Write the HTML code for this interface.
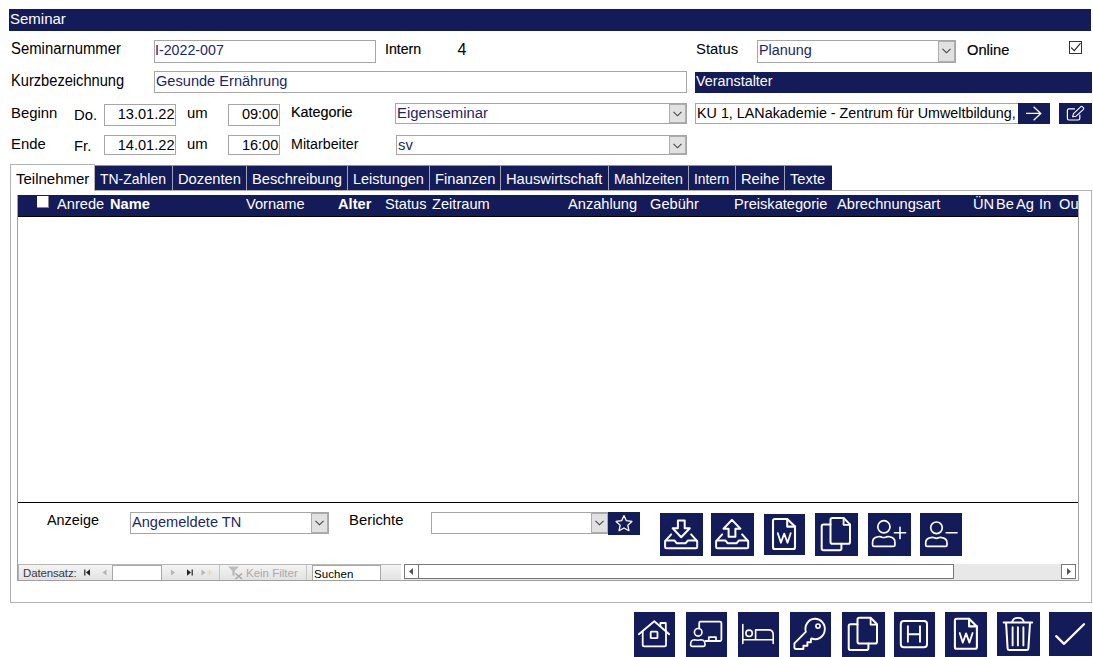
<!DOCTYPE html>
<html><head><meta charset="utf-8">
<style>
html,body{margin:0;padding:0;}
body{width:1093px;height:657px;background:#fff;position:relative;overflow:hidden;font-family:"Liberation Sans",sans-serif;font-size:16px;color:#000;}
.a{position:absolute;white-space:nowrap;}
.t{position:absolute;white-space:nowrap;line-height:18px;font-size:16px;transform:scaleX(.93);transform-origin:0 0;}
.tr{transform-origin:100% 0;}
.w{color:#fff;}
.b{font-weight:bold;}
.sb{-webkit-text-stroke:0.18px #000;}
.nv{background:#141b59;}
.in{position:absolute;box-sizing:border-box;border:1px solid #a6a6a6;background:#fff;overflow:hidden;}
.bl{color:#1d2566;}
.dd{position:absolute;box-sizing:border-box;border:1px solid #adadad;background:#e1e1e1;width:17px;}
.dd svg{position:absolute;left:3px;top:6px;}
.btn{position:absolute;background:#141b59;}
.sep{position:absolute;top:166px;width:1px;height:24px;background:#a0a2b8;}
.tb{font-size:15px;transform:scaleX(.98);}
.hd{font-size:15px;transform:scaleX(.975);}
</style></head><body>

<div class="a nv" style="left:9px;top:9px;width:1082px;height:22px;"></div>
<div class="t w" style="left:10px;top:9.500px;font-size:15px;transform:none;">Seminar</div>

<!-- row1 -->
<div class="t" style="left:11px;top:40px;">Seminarnummer</div>
<div class="in" style="left:154px;top:40px;width:222px;height:23px;"></div>
<div class="t bl" style="left:155px;top:40.600px;font-size:15.300px;transform:scaleX(.93);">I-2022-007</div>
<div class="t sb" style="left:385px;top:39.8px;font-size:14.67px;transform:scaleX(0.965);">Intern</div>
<div class="t" style="left:457.500px;top:41px;font-size:16px;transform:none;">4</div>
<div class="t" style="left:696px;top:39.8px;font-size:14.67px;transform:scaleX(1.014);">Status</div>
<div class="in" style="left:757px;top:40px;width:199px;height:23px;"></div>
<div class="t bl" style="left:759px;top:40.600px;font-size:15.300px;transform:scaleX(.94);">Planung</div>
<div class="dd" style="left:938px;top:41px;height:21px;"><svg width="9" height="6" viewBox="0 0 9 6"><path d="M0.5 0.8L4.5 4.8L8.5 0.8" fill="none" stroke="#444" stroke-width="1.1"/></svg></div>
<div class="t sb" style="left:967px;top:40.8px;font-size:14.67px;transform:none;">Online</div>
<div class="a" style="left:1069px;top:41px;width:11px;height:11px;border:1px solid #333;background:#fff;"><svg style="position:absolute;left:0;top:0" width="11" height="11" viewBox="0 0 11 11"><path d="M1.2 5.700L4.300 8.700L10.600 1.200" fill="none" stroke="#222" stroke-width="1.1"/></svg></div>

<!-- row2 -->
<div class="t" style="left:11px;top:72px;transform:scaleX(.915);">Kurzbezeichnung</div>
<div class="in" style="left:154px;top:71px;width:533px;height:22px;"></div>
<div class="t bl" style="left:156px;top:72.300px;font-size:15.300px;transform:scaleX(.954);">Gesunde Ernährung</div>
<div class="a nv" style="left:695px;top:72px;width:397px;height:21px;"></div>
<div class="t w" style="left:696px;top:71.9px;font-size:14.67px;transform:scaleX(0.979);">Veranstalter</div>

<!-- row3 -->
<div class="t" style="left:11px;top:103.8px;font-size:14.67px;transform:scaleX(1.014);">Beginn</div>
<div class="t" style="left:74px;top:105.8px;font-size:14.67px;transform:scaleX(1.014);">Do.</div>
<div class="in" style="left:104px;top:104px;width:72px;height:22px;"></div>
<div class="t tr" style="right:918.500px;top:104.5px;font-size:15.300px;transform:scaleX(.955);">13.01.22</div>
<div class="t" style="left:187px;top:103.8px;font-size:14.67px;transform:scaleX(1.014);">um</div>
<div class="in" style="left:228px;top:104px;width:52px;height:22px;"></div>
<div class="t tr" style="right:814.500px;top:104.5px;font-size:15.300px;transform:scaleX(.95);">09:00</div>
<div class="t sb" style="left:291px;top:102.8px;font-size:14.67px;transform:scaleX(0.982);">Kategorie</div>
<div class="in" style="left:395px;top:103px;width:292px;height:21px;"></div>
<div class="t bl" style="left:397px;top:104.300px;font-size:15.300px;transform:scaleX(.973);">Eigenseminar</div>
<div class="dd" style="left:669px;top:104px;height:19px;"><svg width="9" height="6" viewBox="0 0 9 6"><path d="M0.5 0.8L4.5 4.8L8.5 0.8" fill="none" stroke="#444" stroke-width="1.1"/></svg></div>
<div class="in" style="left:695px;top:103px;width:324px;height:21px;"></div>
<div class="a" style="left:697px;top:104px;width:321px;height:19px;overflow:hidden;"><div class="t" style="left:0;top:0.4px;font-size:14.67px;transform:scaleX(0.978);">KU 1, LANakademie - Zentrum für Umweltbildung,</div></div>
<div class="btn" style="left:1018px;top:103px;width:32px;height:21px;"><svg width="32" height="21" viewBox="0 0 32 21"><path d="M8 10.4H22.600M15.600 3.700L22.800 10.4L15.600 17.200" fill="none" stroke="#fff" stroke-width="1.3"/></svg></div>
<div class="btn" style="left:1059px;top:103px;width:33px;height:21px;"><svg width="33" height="21" viewBox="0 0 33 21"><path d="M16 5.800H9.800Q8.400 5.800 8.400 7.200V15.600Q8.400 17 9.800 17H19.400Q20.800 17 20.800 15.600V11.500" fill="none" stroke="#fff" stroke-width="1.2"/><path d="M13.600 13.800L14.500 10.700L21.900 3.600Q22.600 3 23.300 3.700L24.500 4.900Q25.100 5.600 24.500 6.300L17 13.200Z" fill="none" stroke="#fff" stroke-width="1.1" stroke-linejoin="round"/></svg></div>

<!-- row4 -->
<div class="t" style="left:11px;top:134.8px;font-size:14.67px;transform:scaleX(1.014);">Ende</div>
<div class="t" style="left:74px;top:136.8px;font-size:14.67px;transform:scaleX(1.014);">Fr.</div>
<div class="in" style="left:104px;top:135px;width:72px;height:20px;"></div>
<div class="t tr" style="right:918.500px;top:135.5px;font-size:15.300px;transform:scaleX(.955);">14.01.22</div>
<div class="t" style="left:187px;top:134.8px;font-size:14.67px;transform:scaleX(1.014);">um</div>
<div class="in" style="left:228px;top:135px;width:52px;height:20px;"></div>
<div class="t tr" style="right:814.500px;top:135.5px;font-size:15.300px;transform:scaleX(.95);">16:00</div>
<div class="t" style="left:291px;top:134.8px;font-size:14.67px;transform:scaleX(0.974);">Mitarbeiter</div>
<div class="in" style="left:396px;top:135px;width:291px;height:20px;"></div>
<div class="t bl" style="left:398px;top:135.800px;font-size:15.300px;transform:scaleX(.973);">sv</div>
<div class="dd" style="left:669px;top:136px;height:18px;"><svg width="9" height="6" viewBox="0 0 9 6"><path d="M0.5 0.8L4.5 4.8L8.5 0.8" fill="none" stroke="#444" stroke-width="1.1"/></svg></div>

<!-- tab page -->
<div class="a" style="left:10px;top:190px;width:1080px;height:411px;border:1px solid #b0b0b0;"></div>
<div class="a nv" style="left:94px;top:165px;width:738px;height:25px;border-top:1px solid #8f92ad;box-sizing:border-box;"></div>
<div class="a" style="left:10px;top:164px;width:85px;height:27px;background:#fff;border:1px solid #b4b4b4;border-bottom:none;box-sizing:border-box;"></div>
<div class="t" style="left:16px;top:169.500px;font-size:15px;transform:none;">Teilnehmer</div>
<div class="t w tb" style="left:100px;top:169.500px;transform:scaleX(.93);">TN-Zahlen</div>
<div class="sep" style="left:172px;"></div>
<div class="t w tb" style="left:178px;top:169.500px;">Dozenten</div>
<div class="sep" style="left:246px;"></div>
<div class="t w tb" style="left:252px;top:169.500px;">Beschreibung</div>
<div class="sep" style="left:347px;"></div>
<div class="t w tb" style="left:353px;top:169.500px;transform:scaleX(.965);">Leistungen</div>
<div class="sep" style="left:429px;"></div>
<div class="t w tb" style="left:435px;top:169.500px;">Finanzen</div>
<div class="sep" style="left:500px;"></div>
<div class="t w tb" style="left:506px;top:169.500px;">Hauswirtschaft</div>
<div class="sep" style="left:608px;"></div>
<div class="t w tb" style="left:614px;top:169.500px;transform:scaleX(.949);">Mahlzeiten</div>
<div class="sep" style="left:688px;"></div>
<div class="t w tb" style="left:694px;top:169.500px;transform:scaleX(.92);">Intern</div>
<div class="sep" style="left:735px;"></div>
<div class="t w tb" style="left:741px;top:169.500px;">Reihe</div>
<div class="sep" style="left:784px;"></div>
<div class="t w tb" style="left:790px;top:169.500px;">Texte</div>

<!-- subform -->
<div class="a" style="left:17px;top:195px;width:1060px;height:385px;border:1px solid #a0a0a0;border-top:none;"></div>
<div class="a nv" style="left:18px;top:195px;width:1060px;height:21px;"></div>
<div class="a" style="left:18px;top:216px;width:1060px;height:1px;background:#000;"></div>
<div class="a" style="left:18px;top:502px;width:1060px;height:1px;background:#000;"></div>
<div class="a" style="left:37px;top:196px;width:11px;height:11px;background:#fff;border-right:1px solid #888;border-bottom:1px solid #888;"></div>
<div class="t w hd" style="left:57px;top:195px;">Anrede</div>
<div class="t w b hd" style="left:110px;top:195px;">Name</div>
<div class="t w hd" style="left:246px;top:195px;">Vorname</div>
<div class="t w b hd" style="left:338px;top:195px;">Alter</div>
<div class="t w hd" style="left:385px;top:195px;">Status</div>
<div class="t w hd" style="left:432px;top:195px;">Zeitraum</div>
<div class="t w hd" style="left:568px;top:195px;">Anzahlung</div>
<div class="t w hd" style="left:650px;top:195px;">Gebühr</div>
<div class="t w hd" style="left:734px;top:195px;">Preiskategorie</div>
<div class="t w hd" style="left:837px;top:195px;">Abrechnungsart</div>
<div class="t w hd" style="left:973px;top:195px;">ÜN</div>
<div class="t w hd" style="left:996px;top:195px;">Be</div>
<div class="t w hd" style="left:1016px;top:195px;">Ag</div>
<div class="t w hd" style="left:1039px;top:195px;">In</div>
<div class="a" style="left:1059px;top:195px;width:19px;height:20px;overflow:hidden;"><div class="t w hd" style="left:0;top:0px;">Ou</div></div>

<!-- bottom of subform -->
<div class="t" style="left:47px;top:511.3px;font-size:14.67px;transform:scaleX(0.982);">Anzeige</div>
<div class="in" style="left:130px;top:512px;width:199px;height:22px;"></div>
<div class="t bl" style="left:132px;top:513.300px;font-size:15.300px;transform:scaleX(.954);">Angemeldete TN</div>
<div class="dd" style="left:311px;top:513px;height:20px;"><svg width="9" height="6" viewBox="0 0 9 6"><path d="M0.5 0.8L4.5 4.8L8.5 0.8" fill="none" stroke="#444" stroke-width="1.1"/></svg></div>
<div class="t" style="left:349px;top:510.8px;font-size:14.67px;transform:scaleX(1.014);">Berichte</div>
<div class="in" style="left:431px;top:512px;width:177px;height:22px;"></div>
<div class="dd" style="left:591px;top:513px;height:20px;"><svg width="9" height="6" viewBox="0 0 9 6"><path d="M0.5 0.8L4.5 4.8L8.5 0.8" fill="none" stroke="#444" stroke-width="1.1"/></svg></div>
<div class="btn" style="left:608px;top:512px;width:32px;height:23px;"><svg width="32" height="23" viewBox="0 0 32 23"><path d="M16 3.6L18.35 8.7L23.9 9.4L19.8 13.2L20.9 18.700L16 16L11.100 18.700L12.200 13.2L8.100 9.4L13.65 8.7Z" fill="none" stroke="#fff" stroke-width="1.3" stroke-linejoin="round"/></svg></div>

<div class="btn" style="left:660px;top:513px;width:43px;height:43px;"><svg width="43" height="43" viewBox="0 0 43 43" style="position:absolute;left:0;top:0"><path d="M5.1 28.6V34Q5.1 35.3 6.4 35.3H35.9Q37.2 35.3 37.2 34V28.6Q37.2 27.4 36 27.4H28L25.7 30.2H16.6L14.4 27.4H6.3Q5.1 27.4 5.1 28.6Z" stroke="#fff" fill="none" stroke-linejoin="round" stroke-linecap="round" stroke-width="2"/><path d="M5.6 27.6L11.2 21.4M36.7 27.6L31.1 21.4" stroke="#fff" fill="none" stroke-linejoin="round" stroke-linecap="round" stroke-width="2"/><path d="M17.9 7.5H24.7V15.2H29.8L21.2 24.2L12.7 15.2H17.9Z" stroke="#fff" fill="none" stroke-linejoin="round" stroke-linecap="round" stroke-width="2"/></svg></div>
<div class="btn" style="left:711px;top:513px;width:43px;height:43px;"><svg width="43" height="43" viewBox="0 0 43 43" style="position:absolute;left:0;top:0"><path d="M5.1 28.6V34Q5.1 35.3 6.4 35.3H35.9Q37.2 35.3 37.2 34V28.6Q37.2 27.4 36 27.4H28L25.7 30.2H16.6L14.4 27.4H6.3Q5.1 27.4 5.1 28.6Z" stroke="#fff" fill="none" stroke-linejoin="round" stroke-linecap="round" stroke-width="2"/><path d="M5.6 27.6L11.2 21.4M36.7 27.6L31.1 21.4" stroke="#fff" fill="none" stroke-linejoin="round" stroke-linecap="round" stroke-width="2"/><path d="M17.6 23.8H24.4V15.8H29.4L20.9 6.9L12.5 15.8H17.6Z" stroke="#fff" fill="none" stroke-linejoin="round" stroke-linecap="round" stroke-width="2"/></svg></div>
<div class="btn" style="left:764px;top:514px;width:41px;height:41px;"><svg width="41" height="41" viewBox="0 0 41 41" style="position:absolute;left:0;top:0"><g transform="translate(0,0)"><path d="M10.8 5H23.2L31 12.6V33.2Q31 35 29.2 35H10.8Q9 35 9 33.2V6.8Q9 5 10.8 5Z" stroke="#fff" fill="none" stroke-linejoin="round" stroke-linecap="round" stroke-width="2.1"/><path d="M23.2 5V12.6H31" stroke="#fff" fill="none" stroke-linejoin="round" stroke-linecap="round" stroke-width="2.1"/><path d="M13.8 19.2L16.9 28.8L20.2 19.6L23.5 28.8L26.7 19.2" stroke="#fff" fill="none" stroke-linejoin="round" stroke-linecap="round" stroke-width="1.8"/></g></svg></div>
<div class="btn" style="left:815px;top:513px;width:43px;height:43px;"><svg width="43" height="43" viewBox="0 0 43 43" style="position:absolute;left:0;top:0"><g transform="translate(0,0)"><path d="M17.4 5H28.6L35 11.4V28.9Q35 30.7 33.2 30.7H17.4Q15.5 30.7 15.5 28.9V6.8Q15.5 5 17.4 5Z" stroke="#fff" fill="none" stroke-linejoin="round" stroke-linecap="round" stroke-width="2"/><path d="M28.6 5.4V11.8H34.6" stroke="#fff" fill="none" stroke-linejoin="round" stroke-linecap="round" stroke-width="1.8"/><path d="M15.5 11.4H8.6Q6.7 11.4 6.7 13.2V35.5Q6.7 37.3 8.6 37.3H24.6Q26.4 37.3 26.4 35.5V30.7" stroke="#fff" fill="none" stroke-linejoin="round" stroke-linecap="round" stroke-width="2"/></g></svg></div>
<div class="btn" style="left:868px;top:513px;width:43px;height:43px;"><svg width="43" height="43" viewBox="0 0 43 43" style="position:absolute;left:0;top:0"><circle cx="15.9" cy="13.8" r="6.1" stroke="#fff" fill="none" stroke-linejoin="round" stroke-linecap="round" stroke-width="1.7"/><path d="M4.6 31.9V29.3Q4.6 24.5 9.6 23.8Q11.6 23.3 13.2 23.900000000000002Q15.75 25.1 18.299999999999997 23.900000000000002Q19.9 23.3 21.9 23.8Q26.9 24.5 26.9 29.3V31.9Q26.9 33.4 25.4 33.4H6.1Q4.6 33.4 4.6 31.9Z" stroke="#fff" fill="none" stroke-linejoin="round" stroke-linecap="round" stroke-width="1.7"/><path d="M26.4 19.8H37.6M32 14.3V25.6" stroke="#fff" fill="none" stroke-linejoin="round" stroke-linecap="round" stroke-width="1.6" stroke-linecap="butt"/></svg></div>
<div class="btn" style="left:920px;top:513px;width:42px;height:43px;"><svg width="42" height="43" viewBox="0 0 42 43" style="position:absolute;left:0;top:0"><circle cx="16.5" cy="14.8" r="5.8" stroke="#fff" fill="none" stroke-linejoin="round" stroke-linecap="round" stroke-width="1.7"/><path d="M5.7 31.9V30.1Q5.7 25.3 10.7 24.6Q12.7 24.1 14.3 24.700000000000003Q16.35 25.900000000000002 18.4 24.700000000000003Q20 24.1 22 24.6Q27 25.3 27 30.1V31.9Q27 33.4 25.5 33.4H7.2Q5.7 33.4 5.7 31.9Z" stroke="#fff" fill="none" stroke-linejoin="round" stroke-linecap="round" stroke-width="1.7"/><path d="M26.2 19.8H37" stroke="#fff" fill="none" stroke-linejoin="round" stroke-linecap="round" stroke-width="1.6"/></svg></div>

<!-- nav bar -->
<div class="a" style="left:18px;top:563px;width:1060px;height:17px;background:#fff;"></div>
<div class="a" style="left:18px;top:564px;width:383px;height:16px;background:linear-gradient(#f4f4f4,#e2e2e2);border-top:1px solid #b8b8b8;box-sizing:border-box;"></div>
<div class="a" style="left:23px;top:564.500px;font-size:11.500px;line-height:17px;color:#3a3a3a;letter-spacing:-0.14px;">Datensatz:</div>
<svg class="a" style="left:84px;top:566px;" width="130" height="13" viewBox="0 0 130 13"><path d="M0.8 3.5V9.5" stroke="#222" stroke-width="1.2"/><path d="M6 3.2V9.8L2 6.5Z" fill="#222"/><path d="M22.5 3.5V9.5L18.5 6.5Z" fill="#b5b5b5"/><path d="M87 3.5V9.5L91 6.5Z" fill="#b5b5b5"/><path d="M103 3.2V9.8L107 6.5Z" fill="#222"/><path d="M108.2 3.5V9.5" stroke="#222" stroke-width="1.2"/><path d="M117.500 3.5V9.5L121.500 6.5Z" fill="#b5b5b5"/><path d="M125.500 3.5V9.5M122.9 5L128 8M122.900 8L128 5" stroke="#f0d9a0" stroke-width="0.9"/></svg>
<div class="a" style="left:112px;top:565px;width:48px;height:14px;background:#fff;border:1px solid #a8a8a8;border-bottom:none;"></div>
<div class="a" style="left:18px;top:564px;width:1px;height:16px;background:#b4b4b4;"></div>
<div class="a" style="left:219px;top:565px;width:1px;height:15px;background:#c4c4c4;"></div>
<svg class="a" style="left:227px;top:565px;" width="18" height="15" viewBox="0 0 18 15"><path d="M1 1.500H12L7.800 6V10.500H5.200V6Z" fill="#bdbdbd"/><path d="M8.500 8.500L15 14M15 8.500L8.500 14" stroke="#a8a8a8" stroke-width="1.5"/></svg>
<div class="a" style="left:246px;top:564.500px;font-size:11.500px;line-height:17px;color:#a9a9a9;letter-spacing:0px;">Kein Filter</div>
<div class="a" style="left:306px;top:565px;width:1px;height:15px;background:#c4c4c4;"></div>
<div class="a" style="left:312px;top:565px;width:69px;height:15px;background:#fff;border:1px solid #a8a8a8;border-bottom:none;box-sizing:border-box;"></div>
<div class="a" style="left:314px;top:564.500px;font-size:11.500px;line-height:18px;color:#000;letter-spacing:0.1px;">Suchen</div>
<div class="a" style="left:401px;top:564px;width:677px;height:16px;background:#e8e8e8;"></div>
<div class="a" style="left:401px;top:564px;width:3px;height:16px;background:#fff;"></div>
<div class="a" style="left:404px;top:564px;width:15px;height:15px;background:#fff;border:1px solid #777;box-sizing:border-box;"><svg style="position:absolute;left:0;top:0" width="13" height="13" viewBox="0 0 13 13"><path d="M8 3V10L4 6.500Z" fill="#555"/></svg></div>
<div class="a" style="left:418px;top:564px;width:536px;height:15px;background:#fff;border:1px solid #777;box-sizing:border-box;"></div>
<div class="a" style="left:1061px;top:564px;width:15px;height:15px;background:#fff;border:1px solid #777;box-sizing:border-box;"><svg style="position:absolute;left:0;top:0" width="13" height="13" viewBox="0 0 13 13"><path d="M5 3V10L9 6.500Z" fill="#555"/></svg></div>
<div class="a" style="left:1076px;top:564px;width:2px;height:16px;background:#fff;"></div>



<div class="btn" style="left:634px;top:612px;width:41px;height:45px;"><svg width="41" height="45" viewBox="0 0 41 45" style="position:absolute;left:0;top:0"><path d="M4.8 22.2L20.3 9.2L35.2 22.2" stroke="#fff" fill="none" stroke-linejoin="round" stroke-linecap="round" stroke-width="1.8"/><path d="M8.7 19.2V32.8Q8.7 34.4 10.3 34.4H30.4Q32 34.4 32 32.8V19.2" stroke="#fff" fill="none" stroke-linejoin="round" stroke-linecap="round" stroke-width="1.8"/><path d="M26.4 14.2V11H31.8V19" stroke="#fff" fill="none" stroke-linejoin="round" stroke-linecap="round" stroke-width="1.8"/><rect x="16.7" y="19.6" width="6.8" height="6.6" rx="0.8" stroke="#fff" fill="none" stroke-linejoin="round" stroke-linecap="round" stroke-width="1.8"/></svg></div>
<div class="btn" style="left:686px;top:612px;width:41px;height:45px;"><svg width="41" height="45" viewBox="0 0 41 45" style="position:absolute;left:0;top:0"><path d="M13.2 15.6V11Q13.2 9.6 14.6 9.6H34Q35.4 9.6 35.4 11V27.6Q35.4 29 34 29H19.6" stroke="#fff" fill="none" stroke-linejoin="round" stroke-linecap="round" stroke-width="1.8"/><path d="M22.8 29V25.1H30V29" stroke="#fff" fill="none" stroke-linejoin="round" stroke-linecap="round" stroke-width="1.7"/><circle cx="12.2" cy="20.3" r="3.8" stroke="#fff" fill="none" stroke-linejoin="round" stroke-linecap="round" stroke-width="1.6"/><path d="M4.6 32.6Q4.6 28 8.4 27.8Q11.8 28.6 15.2 27.8Q19 28 19 32.6Q19 34.4 17.3 34.4H6.3Q4.6 34.4 4.6 32.6Z" stroke="#fff" fill="none" stroke-linejoin="round" stroke-linecap="round" stroke-width="1.6"/></svg></div>
<div class="btn" style="left:738px;top:612px;width:41px;height:45px;"><svg width="41" height="45" viewBox="0 0 41 45" style="position:absolute;left:0;top:0"><path d="M4.8 12.6V31.4M4.8 27.7H35.2M35.2 31.4V23Q35.2 17.9 30.6 17.9H17.6V27.7" stroke="#fff" fill="none" stroke-linejoin="round" stroke-linecap="round" stroke-width="1.6"/><circle cx="11.1" cy="21.3" r="3.2" stroke="#fff" fill="none" stroke-linejoin="round" stroke-linecap="round" stroke-width="1.6"/></svg></div>
<div class="btn" style="left:790px;top:612px;width:41px;height:45px;"><svg width="41" height="45" viewBox="0 0 41 45" style="position:absolute;left:0;top:0"><path d="M15.8 19.8A9.7 10.2 0 1 1 21.6 26.5L20.9 27.2V30.2H17.4V33.7H13.4V37H5.6Q4.4 37 4.4 35.8V31.4Z" stroke="#fff" fill="none" stroke-linejoin="round" stroke-linecap="round" stroke-width="1.9"/><circle cx="28" cy="14.1" r="2.1" stroke="#fff" fill="none" stroke-linejoin="round" stroke-linecap="round" stroke-width="1.7"/></svg></div>
<div class="btn" style="left:842px;top:612px;width:43px;height:45px;"><svg width="43" height="45" viewBox="0 0 43 45" style="position:absolute;left:0;top:0"><g transform="translate(0,0.8)"><path d="M17.4 5H28.6L35 11.4V28.9Q35 30.7 33.2 30.7H17.4Q15.5 30.7 15.5 28.9V6.8Q15.5 5 17.4 5Z" stroke="#fff" fill="none" stroke-linejoin="round" stroke-linecap="round" stroke-width="2"/><path d="M28.6 5.4V11.8H34.6" stroke="#fff" fill="none" stroke-linejoin="round" stroke-linecap="round" stroke-width="1.8"/><path d="M15.5 11.4H8.6Q6.7 11.4 6.7 13.2V35.5Q6.7 37.3 8.6 37.3H24.6Q26.4 37.3 26.4 35.5V30.7" stroke="#fff" fill="none" stroke-linejoin="round" stroke-linecap="round" stroke-width="2"/></g></svg></div>
<div class="btn" style="left:894px;top:612px;width:41px;height:45px;"><svg width="41" height="45" viewBox="0 0 41 45" style="position:absolute;left:0;top:0"><rect x="6.8" y="8.9" width="26.2" height="26.3" rx="3" stroke="#fff" fill="none" stroke-linejoin="round" stroke-linecap="round" stroke-width="2"/><path d="M13.9 14.2V29.8M26 14.2V29.8M13.9 22.3H26" stroke="#fff" fill="none" stroke-linejoin="round" stroke-linecap="round" stroke-width="1.9" stroke-linecap="butt"/></svg></div>
<div class="btn" style="left:945px;top:612px;width:42px;height:45px;"><svg width="42" height="45" viewBox="0 0 42 45" style="position:absolute;left:0;top:0"><g transform="translate(0.9,1.8)"><path d="M10.8 5H23.2L31 12.6V33.2Q31 35 29.2 35H10.8Q9 35 9 33.2V6.8Q9 5 10.8 5Z" stroke="#fff" fill="none" stroke-linejoin="round" stroke-linecap="round" stroke-width="2.1"/><path d="M23.2 5V12.6H31" stroke="#fff" fill="none" stroke-linejoin="round" stroke-linecap="round" stroke-width="2.1"/><path d="M13.8 19.2L16.9 28.8L20.2 19.6L23.5 28.8L26.7 19.2" stroke="#fff" fill="none" stroke-linejoin="round" stroke-linecap="round" stroke-width="1.8"/></g></svg></div>
<div class="btn" style="left:997px;top:612px;width:43px;height:44px;"><svg width="43" height="44" viewBox="0 0 43 44" style="position:absolute;left:0;top:0"><path d="M6.6 10.6H35.2" stroke="#fff" fill="none" stroke-linejoin="round" stroke-linecap="round" stroke-width="2"/><path d="M15.2 10.2Q15.8 5.9 21 5.9Q26.200 5.9 26.8 10.2" stroke="#fff" fill="none" stroke-linejoin="round" stroke-linecap="round" stroke-width="1.9"/><path d="M9.100 11L10.6 36.4Q10.8 38.1 12.4 38.1H29.6Q31.200 38.1 31.4 36.4L33 11" stroke="#fff" fill="none" stroke-linejoin="round" stroke-linecap="round" stroke-width="2"/><path d="M15.6 15.2V33.4M20.9 15.2V33.4M26.4 15.2V33.4" stroke="#fff" fill="none" stroke-linejoin="round" stroke-linecap="round" stroke-width="1.9"/></svg></div>
<div class="btn" style="left:1049px;top:612px;width:43px;height:44px;"><svg width="43" height="44" viewBox="0 0 43 44" style="position:absolute;left:0;top:0"><path d="M7.2 24.2L15.1 31.8L35 12.2" stroke="#fff" fill="none" stroke-linejoin="round" stroke-linecap="round" stroke-width="2.3" stroke-linejoin="miter" stroke-linecap="butt"/></svg></div>

</body></html>
